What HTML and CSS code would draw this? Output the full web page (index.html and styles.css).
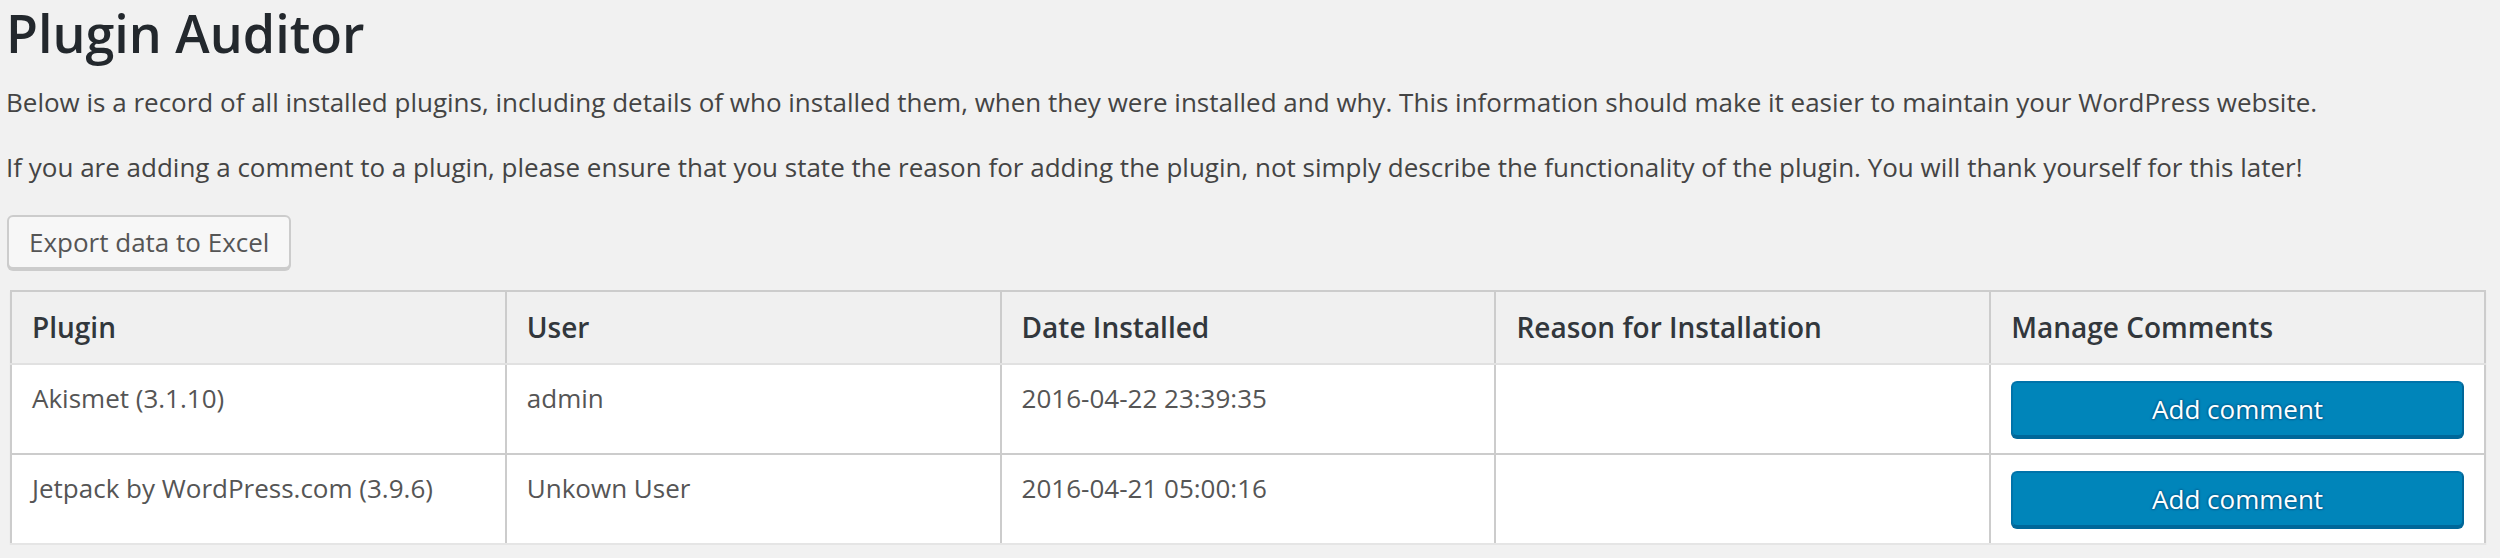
FILE: index.html
```html
<!DOCTYPE html>
<html lang="en">
<head>
<meta charset="utf-8">
<title>Plugin Auditor</title>
<link rel="stylesheet" href="styles.css">
</head>
<body>
<div class="wrap">
  <h1 class="page-title">Plugin Auditor</h1>
  <p class="intro">Below is a record of all installed plugins, including details of who installed them, when they were installed and why. This information should make it easier to maintain your WordPress website.</p>
  <p class="intro">If you are adding a comment to a plugin, please ensure that you state the reason for adding the plugin, not simply describe the functionality of the plugin. You will thank yourself for this later!</p>
  <div class="actions">
    <button class="button" type="button">Export data to Excel</button>
  </div>
  <table class="audit-table">
    <thead>
      <tr>
        <th>Plugin</th>
        <th>User</th>
        <th>Date Installed</th>
        <th>Reason for Installation</th>
        <th>Manage Comments</th>
      </tr>
    </thead>
    <tbody>
      <tr>
        <td>Akismet (3.1.10)</td>
        <td>admin</td>
        <td>2016-04-22 23:39:35</td>
        <td></td>
        <td><button class="button-primary" type="button">Add comment</button></td>
      </tr>
      <tr class="last">
        <td>Jetpack by WordPress.com (3.9.6)</td>
        <td>Unkown User</td>
        <td>2016-04-21 05:00:16</td>
        <td></td>
        <td><button class="button-primary" type="button">Add comment</button></td>
      </tr>
    </tbody>
  </table>
</div>
</body>
</html>
```
FILE: styles.css
```css
html, body {
  margin: 0;
  padding: 0;
  background: #f1f1f1;
}

body {
  font-family: "Open Sans", "Liberation Sans", sans-serif;
  color: #444;
}

.wrap {
  padding: 1px 14px 0 6px;
}

.page-title {
  margin: 0 0 18px;
  font-size: 52px;
  line-height: 64px;
  font-weight: 600;
  color: #23282d;
}

.intro {
  margin: 0 0 26px;
  font-size: 26px;
  line-height: 39px;
  color: #444;
}

.actions {
  padding-top: 2px;
  padding-left: 1px;
}

.button {
  display: inline-block;
  box-sizing: border-box;
  height: 54px;
  margin: 0;
  padding: 0 20px;
  font-family: "Open Sans", "Liberation Sans", sans-serif;
  font-size: 26px;
  line-height: 50px;
  color: #555;
  background: #f7f7f7;
  border: 2px solid #ccc;
  border-radius: 6px;
  box-shadow: 0 2px 0 #ccc;
  vertical-align: top;
  white-space: nowrap;
}

.audit-table {
  margin: 21px 0 0 4px;
  width: calc(100% - 4px);
  table-layout: fixed;
  border-collapse: collapse;
  border: 2px solid #ccc;
  border-bottom-color: #e5e5e5;
  box-shadow: 0 2px 2px rgba(0, 0, 0, 0.04);
}

.audit-table th {
  padding: 16px 20px;
  font-size: 28px;
  line-height: 39px;
  font-weight: 600;
  color: #32373c;
  text-align: left;
  background: #f0f0f0;
  border-left: 2px solid #ccc;
  border-right: 2px solid #ccc;
  border-bottom: 2px solid #e1e1e1;
}

.audit-table td {
  padding: 16px 20px;
  font-size: 26px;
  line-height: 34px;
  color: #555;
  vertical-align: top;
  background: #fff;
  border-left: 2px solid #ccc;
  border-right: 2px solid #ccc;
  border-bottom: 2px solid #ccc;
}

.audit-table tr.last td {
  border-bottom-color: #e5e5e5;
}

.button-primary {
  display: block;
  box-sizing: border-box;
  width: 100%;
  height: 56px;
  margin: 0;
  padding: 0 20px;
  font-family: "Open Sans", "Liberation Sans", sans-serif;
  font-size: 26px;
  line-height: 52px;
  color: #fff;
  background: #0085ba;
  border: 2px solid #0073aa;
  border-bottom-color: #006799;
  border-right-color: #006799;
  border-radius: 6px;
  box-shadow: 0 2px 0 #006799;
  text-shadow: 0 -1px 2px #006799, 1px 0 2px #006799, 0 1px 2px #006799, -1px 0 2px #006799;
}
```
